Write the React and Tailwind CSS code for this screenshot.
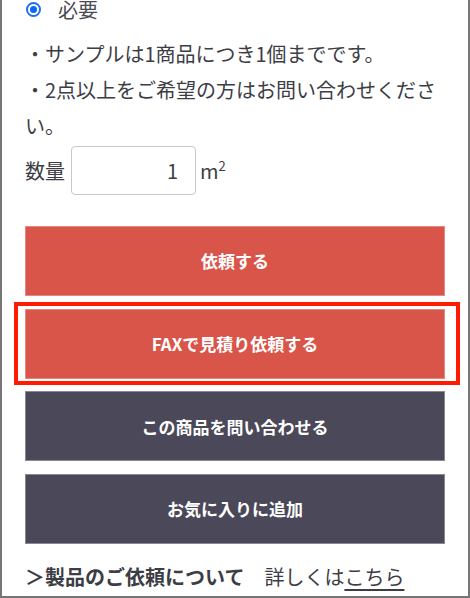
export default function App() {
  const font = { fontFamily: '"Noto Sans CJK JP", "Noto Sans", sans-serif' };
  return (
    <div
      className="relative w-[470px] h-[598px] overflow-hidden bg-white border-l-2 border-r-2 border-b-2 border-[#767676] text-[#3d3d45]"
      style={font}
    >
      <div className="pl-[23px] w-[443px]">
        {/* radio row */}
        <div className="h-[19px] flex items-center">
          <div className="w-[15px] h-[15px] rounded-full border-2 border-[#1f6fef] bg-white p-[2px] ml-[1px]">
            <div className="w-full h-full rounded-full bg-[#0a66f5]" />
          </div>
          <span className="ml-[17px] text-[20px] leading-none text-[#4a4a52]">必要</span>
        </div>

        {/* notes */}
        <div className="mt-[17px] w-[420px] text-[20px] leading-[36px]">
          <p>・サンプルは1商品につき1個までです。</p>
          <p>・2点以上をご希望の方はお問い合わせください。</p>
        </div>

        {/* quantity */}
        <div className="mt-[2px] h-[49px] flex items-center text-[20px]">
          <span className="leading-none">数量</span>
          <div className="ml-[6px] w-[125px] h-[49px] rounded-[4px] border border-[#c8c8cc] bg-white flex items-center justify-end pr-[17px]">
            <span className="leading-none">1</span>
          </div>
          <span className="ml-[4px] leading-none">
            m<sup className="text-[13px] -top-[0.6em]">2</sup>
          </span>
        </div>

        {/* buttons */}
        <div className="mt-[31px] w-[420px] flex flex-col gap-[12.7px]">
          <div className="h-[70px] flex items-center justify-center bg-[#d9554a] border border-[#e4877f] text-white font-bold text-[17px]">
            依頼する
          </div>
          <div className="h-[70px] flex items-center justify-center bg-[#d9554a] border border-[#e4877f] text-white font-bold text-[17px]">
            FAXで見積り依頼する
          </div>
          <div className="h-[70px] flex items-center justify-center bg-[#4b4959] border border-[#8a8896] text-white font-bold text-[17px]">
            この商品を問い合わせる
          </div>
          <div className="h-[70px] flex items-center justify-center bg-[#4b4959] border border-[#8a8896] text-white font-bold text-[17px]">
            お気に入りに追加
          </div>
        </div>

        {/* bottom link */}
        <div className="mt-[15px] text-[20px] leading-[36px] whitespace-nowrap">
          <span className="font-bold">＞製品のご依頼について</span>
          <span>　詳しくは</span>
          <span className="underline underline-offset-[4px]">こちら</span>
        </div>
      </div>

      {/* red highlight annotation */}
      <div className="absolute left-[12px] top-[302px] w-[446px] h-[83px] border-4 border-[#ff1a00] pointer-events-none" />
    </div>
  );
}
